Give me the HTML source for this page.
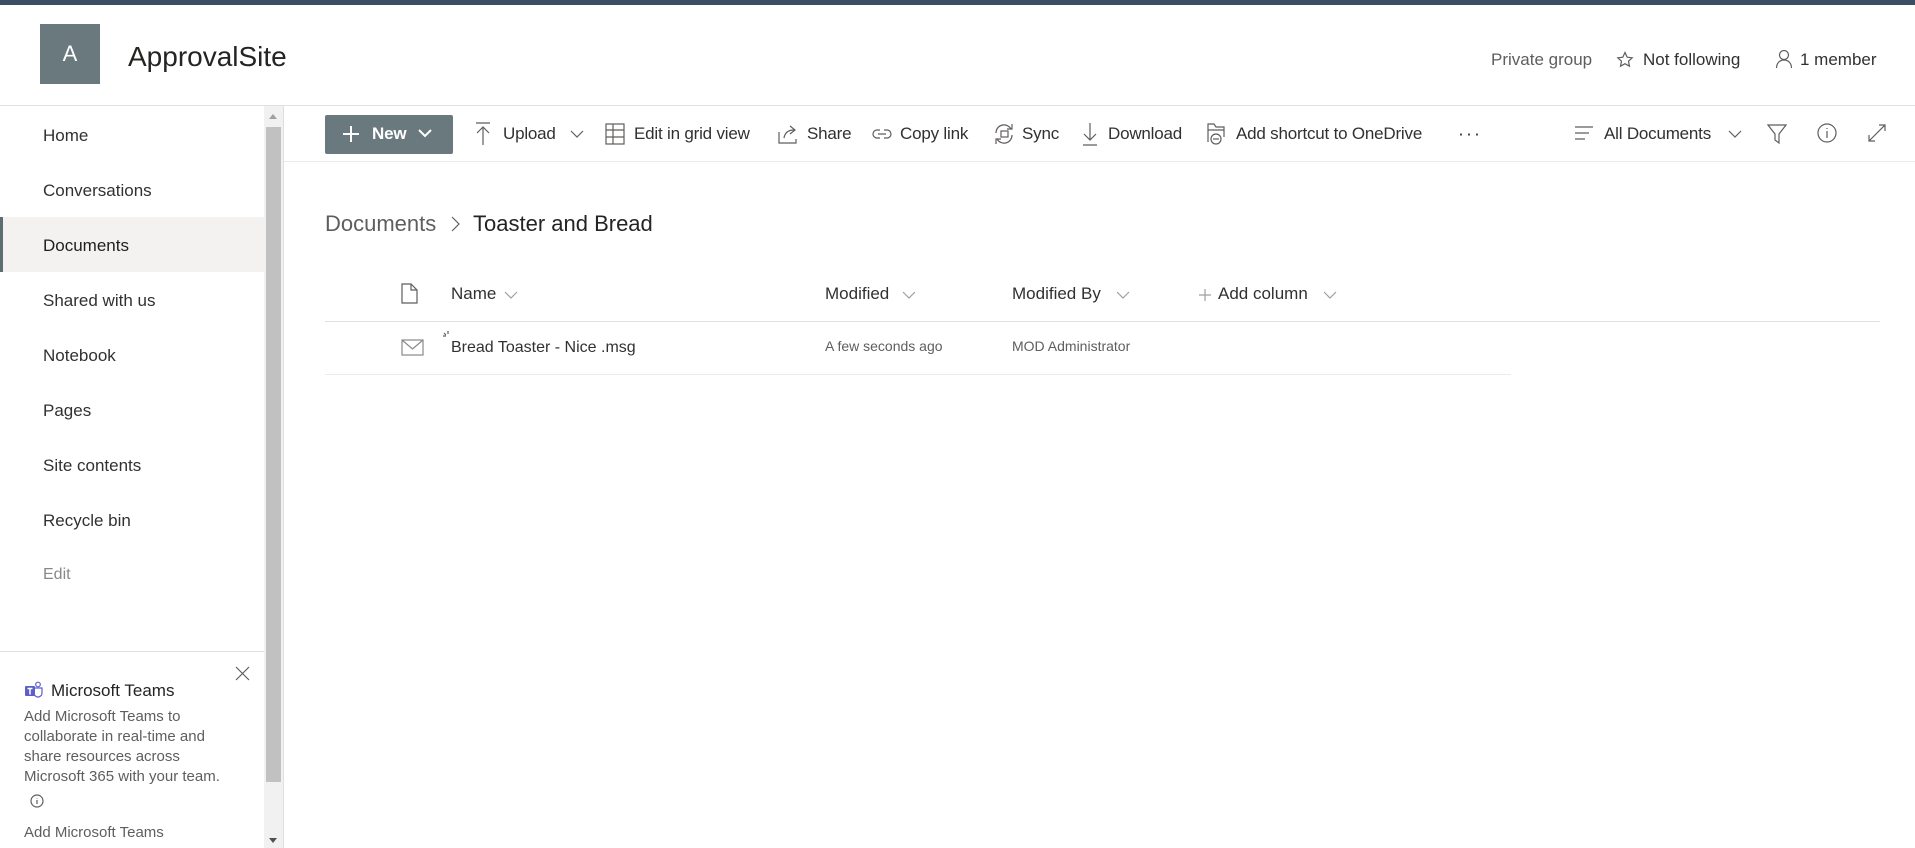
<!DOCTYPE html>
<html><head><meta charset="utf-8"><style>
*{margin:0;padding:0;box-sizing:border-box}
body{width:1915px;height:848px;overflow:hidden;background:#fff;font-family:"Liberation Sans",sans-serif;color:#323130;position:relative}
.a{position:absolute;white-space:nowrap}
.c{transform:translateY(-50%)}
svg{position:absolute;fill:none;stroke:#605e5c;stroke-width:1.2}
.nav{position:absolute;left:43px;font-size:17px;color:#323130;transform:translateY(-50%)}
.cmd{position:absolute;top:134px;transform:translateY(-50%);font-size:17px;color:#323130;letter-spacing:-0.2px}
.t{font-size:15px;color:#605e5c;line-height:20px}
</style></head><body>
<div class="a" style="left:0;top:0;width:1915px;height:5px;background:#3b4e63"></div>
<div class="a" style="left:40px;top:24px;width:60px;height:60px;background:#69797e;color:#fff;font-size:22px;text-align:center;line-height:60px">A</div>
<div class="a c" style="left:128px;top:57px;font-size:28px;color:#252423">ApprovalSite</div>
<div class="a c" style="left:1491px;top:60px;font-size:17px;color:#605e5c">Private group</div>
<svg style="left:1616px;top:51px" width="18" height="18" viewBox="0 0 18 18"><path d="M9 1.5l2.2 4.7 5 .6-3.7 3.4 1 5L9 12.7l-4.5 2.5 1-5L1.8 6.8l5-.6z"/></svg>
<div class="a c" style="left:1643px;top:60px;font-size:17px">Not following</div>
<svg style="left:1775px;top:49px" width="18" height="20" viewBox="0 0 18 20"><circle cx="9" cy="6" r="4.5"/><path d="M1.5 19c0-5 3.4-8 7.5-8s7.5 3 7.5 8"/></svg>
<div class="a c" style="left:1800px;top:60px;font-size:17px">1 member</div>
<div class="a" style="left:0;top:105px;width:1915px;height:1px;background:#e1dfdd"></div>

<!-- left nav -->
<div class="a" style="left:0;top:217px;width:264px;height:55px;background:#f3f2f1;border-left:3px solid #5d6d72"></div>
<div class="nav" style="top:136px">Home</div>
<div class="nav" style="top:191px">Conversations</div>
<div class="nav" style="top:246px;font-weight:normal;color:#201f1e">Documents</div>
<div class="nav" style="top:301px">Shared with us</div>
<div class="nav" style="top:356px">Notebook</div>
<div class="nav" style="top:411px">Pages</div>
<div class="nav" style="top:466px">Site contents</div>
<div class="nav" style="top:521px">Recycle bin</div>
<div class="nav" style="top:575px;color:#8a8886;font-size:16px">Edit</div>
<div class="a" style="left:0;top:651px;width:264px;height:1px;background:#e1dfdd"></div>
<div class="a" style="left:264px;top:106px;width:19px;height:742px;background:#f1f1f1"></div>
<div class="a" style="left:266px;top:127px;width:15px;height:655px;background:#c1c1c1"></div>
<div class="a" style="left:269px;top:114px;width:0;height:0;border-left:4px solid transparent;border-right:4px solid transparent;border-bottom:5px solid #a0a0a0"></div>
<div class="a" style="left:269px;top:838px;width:0;height:0;border-left:4px solid transparent;border-right:4px solid transparent;border-top:5px solid #505050"></div>
<div class="a" style="left:283px;top:106px;width:1px;height:742px;background:#e1dfdd"></div>
<svg style="left:235px;top:666px" width="15" height="15" viewBox="0 0 15 15"><path d="M1 1l13 13M14 1L1 14" stroke="#605e5c"/></svg>
<svg style="left:24px;top:681px;stroke:none" width="20" height="18" viewBox="0 0 20 18"><circle cx="14" cy="3.5" r="2.3" fill="none" stroke="#5b5fc7" stroke-width="1.2"/><path d="M10 7h8v5a4 4 0 0 1-8 0z" fill="none" stroke="#5b5fc7" stroke-width="1.2"/><rect x="1" y="5" width="10" height="10" rx="1" fill="#5b5fc7"/><path d="M3.5 7.5h5M6 7.5v6" stroke="#fff" stroke-width="1.5"/></svg>
<div class="a c" style="left:51px;top:691px;font-size:17px;color:#252423">Microsoft Teams</div>
<div class="a t" style="left:24px;top:707px">Add Microsoft Teams to<br>collaborate in real-time and<br>share resources across<br>Microsoft 365 with your team.</div>
<svg style="left:30px;top:794px" width="14" height="14" viewBox="0 0 14 14"><circle cx="7" cy="7" r="6"/><path d="M7 6v4M7 4v.5"/></svg>
<div class="a t c" style="left:24px;top:833px">Add Microsoft Teams</div>

<!-- command bar -->
<div class="a" style="left:325px;top:115px;width:128px;height:39px;background:#69797e;border-radius:2px"></div>
<svg style="left:342px;top:125px;stroke:#fff;stroke-width:2" width="18" height="18" viewBox="0 0 18 18"><path d="M9 1v16M1 9h16"/></svg>
<div class="cmd" style="left:372px;color:#fff;font-weight:bold">New</div>
<svg style="left:418px;top:128px;stroke:#fff;stroke-width:2" width="14" height="10" viewBox="0 0 14 10"><path d="M1 2l6 6 6-6"/></svg>
<svg style="left:475px;top:122px" width="16" height="24" viewBox="0 0 16 24"><path d="M1 1h14M8 5v18M2 11l6-6 6 6"/></svg>
<div class="cmd" style="left:503px">Upload</div>
<svg style="left:570px;top:130px" width="14" height="8" viewBox="0 0 14 8"><path d="M1 1l6 6 6-6"/></svg>
<svg style="left:605px;top:123px" width="20" height="22" viewBox="0 0 20 22"><rect x="1" y="1" width="18" height="20"/><path d="M1 7h18M1 14h18M8 1v20"/></svg>
<div class="cmd" style="left:634px">Edit in grid view</div>
<svg style="left:778px;top:124px" width="20" height="20" viewBox="0 0 20 20"><path d="M1 8v11h17v-4M6 14c1-6 5-8 10-8M12 2l5 4-5 4"/></svg>
<div class="cmd" style="left:807px">Share</div>
<svg style="left:871px;top:126px" width="22" height="16" viewBox="0 0 22 16"><path d="M9 4H6a4 4 0 0 0 0 8h3M13 4h3a4 4 0 0 1 0 8h-3M7 8h8"/></svg>
<div class="cmd" style="left:900px">Copy link</div>
<svg style="left:993px;top:122px" width="22" height="24" viewBox="0 0 22 24"><path d="M3 11a8 8 0 0 1 15-4M19 13a8 8 0 0 1-15 4M14 7h5V2M8 17H3v5"/><rect x="8" y="9" width="7" height="6"/></svg>
<div class="cmd" style="left:1022px">Sync</div>
<svg style="left:1082px;top:122px" width="16" height="24" viewBox="0 0 16 24"><path d="M8 1v17M2 12l6 6 6-6M1 23h14"/></svg>
<div class="cmd" style="left:1108px">Download</div>
<svg style="left:1206px;top:122px" width="20" height="24" viewBox="0 0 20 24"><path d="M2 20V2h6l2 3h8v10M2 8h16"/><circle cx="10" cy="17" r="5"/><path d="M7 17h6"/></svg>
<div class="cmd" style="left:1236px">Add shortcut to OneDrive</div>
<div class="cmd" style="left:1458px;font-size:18px;letter-spacing:2px">···</div>
<svg style="left:1574px;top:125px" width="20" height="16" viewBox="0 0 20 16"><path d="M1 2h18M1 8h14M1 14h10"/></svg>
<div class="cmd" style="left:1604px">All Documents</div>
<svg style="left:1728px;top:130px" width="14" height="8" viewBox="0 0 14 8"><path d="M1 1l6 6 6-6"/></svg>
<svg style="left:1767px;top:124px" width="20" height="20" viewBox="0 0 20 20"><path d="M1 1h18l-7 9v9l-4-3v-6z"/></svg>
<svg style="left:1817px;top:123px" width="20" height="20" viewBox="0 0 20 20"><circle cx="10" cy="10" r="9"/><path d="M10 8v7M10 5v1"/></svg>
<svg style="left:1867px;top:123px" width="20" height="20" viewBox="0 0 20 20"><path d="M2 18L18 2M12 2h6v6M2 12v6h6"/></svg>
<div class="a" style="left:284px;top:161px;width:1631px;height:1px;background:#edebe9"></div>

<!-- breadcrumb -->
<div class="a c" style="left:325px;top:224px;font-size:22px;color:#605e5c">Documents</div>
<svg style="left:450px;top:216px" width="10" height="16" viewBox="0 0 10 16"><path d="M2 1l7 7-7 7"/></svg>
<div class="a c" style="left:473px;top:224px;font-size:22px;color:#252423">Toaster and Bread</div>

<!-- list -->
<svg style="left:401px;top:283px" width="17" height="21" viewBox="0 0 17 21"><path d="M1 1h9l6 6v13H1zM10 1v6h6"/></svg>
<div class="a c" style="left:451px;top:294px;font-size:17px">Name</div>
<svg style="left:504px;top:291px;stroke:#a19f9d" width="14" height="8" viewBox="0 0 14 8"><path d="M1 1l6 6 6-6"/></svg>
<div class="a c" style="left:825px;top:294px;font-size:17px">Modified</div>
<svg style="left:902px;top:291px;stroke:#a19f9d" width="14" height="8" viewBox="0 0 14 8"><path d="M1 1l6 6 6-6"/></svg>
<div class="a c" style="left:1012px;top:294px;font-size:17px">Modified By</div>
<svg style="left:1116px;top:291px;stroke:#a19f9d" width="14" height="8" viewBox="0 0 14 8"><path d="M1 1l6 6 6-6"/></svg>
<svg style="left:1199px;top:289px;stroke:#a19f9d" width="12" height="12" viewBox="0 0 12 12"><path d="M6 0v12M0 6h12"/></svg>
<div class="a c" style="left:1218px;top:294px;font-size:17px">Add column</div>
<svg style="left:1323px;top:291px;stroke:#a19f9d" width="14" height="8" viewBox="0 0 14 8"><path d="M1 1l6 6 6-6"/></svg>
<div class="a" style="left:325px;top:321px;width:1555px;height:1px;background:#e1dfdd"></div>
<svg style="left:401px;top:339px;stroke:#8a8886" width="23" height="17" viewBox="0 0 23 17"><rect x="1" y="1" width="21" height="15"/><path d="M1 1l10.5 9L22 1"/></svg>
<svg style="left:442px;top:331px" width="10" height="10" viewBox="0 0 10 10"><path d="M6 0v3M1 5h3M2 2l2 2"/></svg>
<div class="a c" style="left:451px;top:348px;font-size:16px">Bread Toaster - Nice .msg</div>
<div class="a c" style="left:825px;top:346px;font-size:14px;color:#605e5c">A few seconds ago</div>
<div class="a c" style="left:1012px;top:346px;font-size:14px;color:#605e5c">MOD Administrator</div>
<div class="a" style="left:325px;top:374px;width:1186px;height:1px;background:#edebe9"></div>
</body></html>
